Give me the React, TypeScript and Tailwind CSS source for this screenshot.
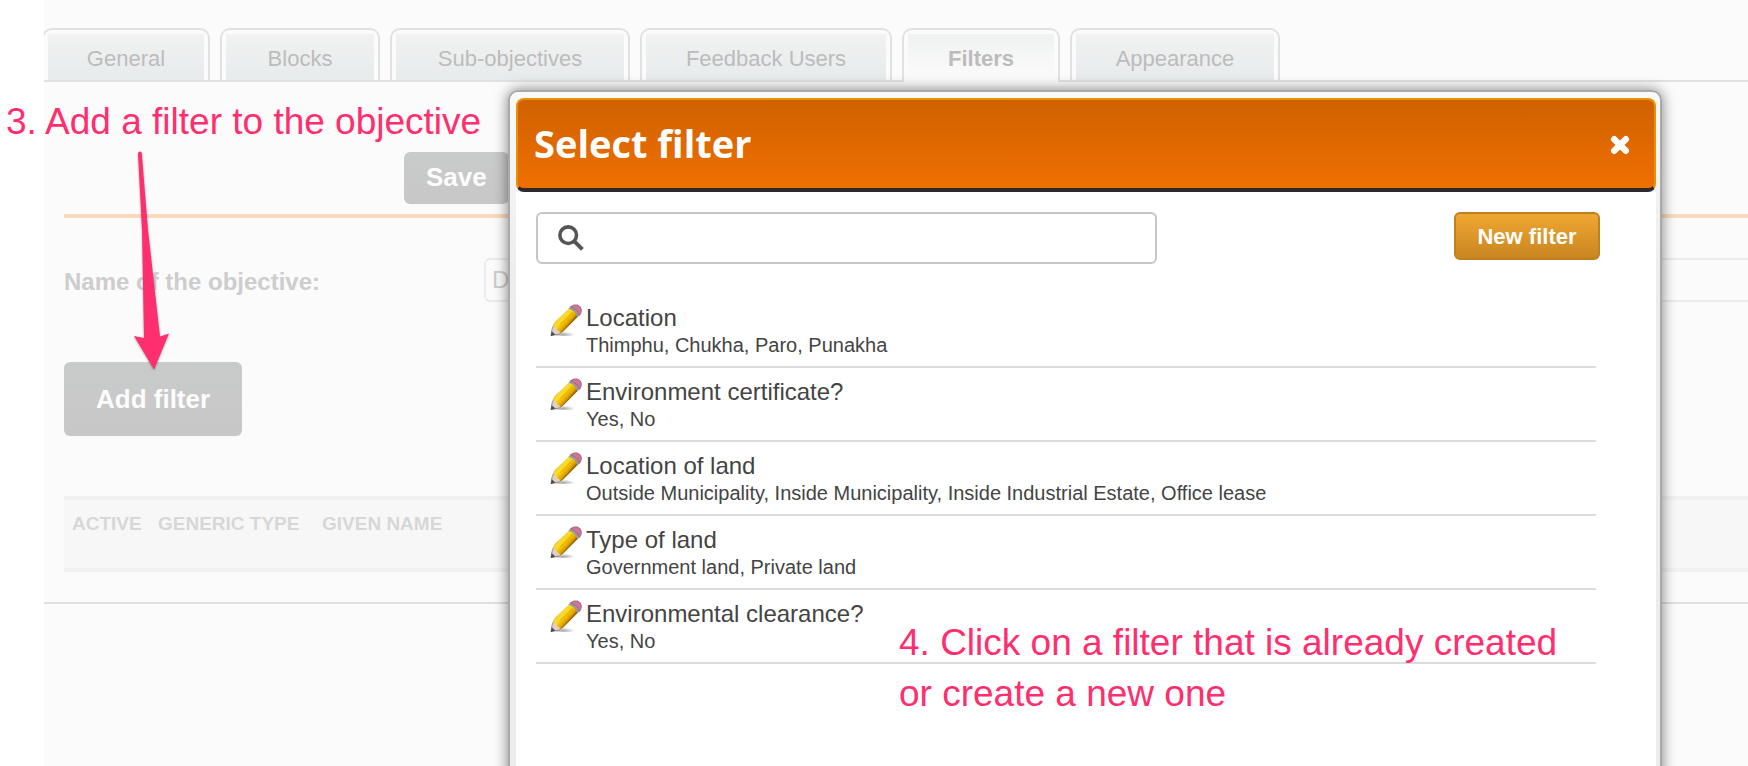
import { useState } from "react";

const tabs = [
  { name: "General", width: "w-[168px]" },
  { name: "Blocks", width: "w-[160px]" },
  { name: "Sub-objectives", width: "w-[240px]" },
  { name: "Feedback Users", width: "w-[252px]" },
  { name: "Filters", width: "w-[158px]" },
  { name: "Appearance", width: "w-[210px]" },
];

const filters = [
  { name: "Location", values: "Thimphu, Chukha, Paro, Punakha" },
  { name: "Environment certificate?", values: "Yes, No" },
  {
    name: "Location of land",
    values: "Outside Municipality, Inside Municipality, Inside Industrial Estate, Office lease",
  },
  { name: "Type of land", values: "Government land, Private land" },
  { name: "Environmental clearance?", values: "Yes, No" },
];

function Pencil() {
  return (
    <svg viewBox="0 0 32 32" className="size-8" aria-hidden="true">
      <defs>
        <linearGradient id="wood" x1="11" y1="10" x2="21" y2="19" gradientUnits="userSpaceOnUse">
          <stop offset="0" stopColor="#b98f10" />
          <stop offset="0.14" stopColor="#f6d433" />
          <stop offset="0.35" stopColor="#f9dc2c" />
          <stop offset="0.6" stopColor="#f2c000" />
          <stop offset="0.85" stopColor="#dc9a00" />
          <stop offset="1" stopColor="#8f6208" />
        </linearGradient>
        <radialGradient id="ground">
          <stop offset="0" stopColor="#000" stopOpacity="0.35" />
          <stop offset="1" stopColor="#000" stopOpacity="0" />
        </radialGradient>
      </defs>
      <ellipse cx="13" cy="30.6" rx="12" ry="3" fill="url(#ground)" />
      <path d="M1 31.6 L2.2 24.6 L4 20.8 L12 28 L9.2 30 Z" fill="#dfd0bf" stroke="#85796a" strokeWidth="0.8" />
      <path d="M0.8 31.9 L1.6 27.2 L5.4 30.4 Z" fill="#4a4a50" />
      <path d="M3.2 21.4 Q3.8 19 5.4 17.4 L19 4.4 Q25.8 5.8 27.6 13 L13 27.8 Q11.6 29 10 28.8 Q9.8 26.8 7.6 26.4 Q7.4 24.2 5.2 23.8 Q5 22.2 3.2 21.4 Z" fill="url(#wood)" />
      <path d="M10.4 20.6 L23 8.2" stroke="#d9a800" strokeWidth="0.8" />
      <path d="M18.4 4.8 L20.8 2.4 Q28 4 29.6 11.2 L27.4 13.4 Q25.4 6.6 18.4 4.8 Z" fill="#9a989c" />
      <path d="M20.4 2.8 Q23.6 0.2 27.4 1 Q31.2 2.2 31.4 6 Q31.5 9.2 29.5 11.4 Q27.8 5 20.4 2.8 Z" fill="#d0749a" stroke="#9c6179" strokeWidth="0.8" />
    </svg>
  );
}

function Magnifier() {
  return (
    <svg viewBox="0 0 26 26" className="size-[26px] shrink-0" fill="none" stroke="#555" aria-hidden="true">
      <circle cx="10.2" cy="10.2" r="8.3" strokeWidth="3.6" />
      <path d="M16.4 16.4 L24.4 24.4" strokeWidth="4" />
    </svg>
  );
}

function Tabs() {
  return (
    <nav className="overflow-hidden pt-7">
      <div className="-ml-0.5 flex h-[54px] items-start gap-2.5 border-b-2 border-[#e1e1e1]">
        {tabs.map((tab) => {
          const active = tab.name === "Filters";
          return (
            <button
              key={tab.name}
              type="button"
              className={`${tab.width} ${
                active ? "h-[54px]" : "h-[52px]"
              } flex shrink-0 flex-col rounded-t-[10px] border-2 border-b-0 border-[#e1e1e1] bg-[#fbfbfb] px-1 pt-1 text-[22px] text-[#bcbcbc]`}
            >
              <span
                className={`flex h-[46px] w-full items-center justify-center bg-linear-to-b pt-0.5 ${
                  active ? "from-[#f0f2f1] to-[#fbfbfb] font-bold" : "from-[#f1f2f1] to-[#e7ebec]"
                }`}
              >
                {tab.name}
              </span>
            </button>
          );
        })}
      </div>
    </nav>
  );
}

function ObjectiveForm() {
  return (
    <main className="border-b-2 border-[#dfdfdf] pl-5 pb-[30px]">
      <div className="flex h-[136px] items-start border-b-4 border-[#fbdaba] pt-[70px] pl-[340px]">
        <button
          type="button"
          className="h-[52px] rounded-md bg-linear-to-b from-[#c9cbca] to-[#c7c7c7] px-[22px] pb-0.5 text-[26px] font-bold text-[#fcfcfc]"
        >
          Save
        </button>
      </div>
      <div className="flex items-center pt-10">
        <label htmlFor="objective" className="w-[420px] shrink-0 pt-1 text-2xl font-bold text-[#cdcdcd]">
          Name of the objective:
        </label>
        <input
          id="objective"
          defaultValue="D"
          className="h-11 min-w-0 flex-1 rounded-l-md border-2 border-r-0 border-[#ebebeb] px-1.5 text-2xl text-[#cdcdcd] outline-none"
        />
      </div>
      <button
        type="button"
        className="mt-[60px] block h-[74px] rounded-md bg-linear-to-b from-[#c9cbca] to-[#c7c7c7] px-8 text-[26px] font-bold text-[#fcfcfc]"
      >
        Add filter
      </button>
      <table className="mt-[60px] w-full border-separate border-spacing-0 border-y-4 border-[#f1f1f1] bg-[#f7f7f7] text-[19px] text-[#d7d7d7]">
        <thead>
          <tr className="h-[68px] text-left align-top leading-6">
            <th className="w-[86px] pt-3 pl-2">ACTIVE</th>
            <th className="w-[164px] pt-3 pl-2">GENERIC TYPE</th>
            <th className="pt-3 pl-2">GIVEN NAME</th>
          </tr>
        </thead>
      </table>
    </main>
  );
}

function FilterDialog() {
  const [query, setQuery] = useState("");
  const shown = filters.filter((f) => f.name.toLowerCase().includes(query.toLowerCase()));
  return (
    <section
      role="dialog"
      aria-labelledby="dialog-title"
      className="absolute top-[90px] right-[86px] -bottom-5 left-[508px] flex flex-col rounded-[10px] border-2 border-[#a9a9a9] bg-linear-to-b from-[#f9f9f9] to-[#ececec] to-[200px] pt-1.5 pr-1 pl-1.5 shadow-[0_0_14px_rgba(0,0,0,0.5)]"
    >
      <header className="flex h-[94px] shrink-0 items-center justify-between rounded-lg border-2 border-b-4 border-[#e89200] border-b-[#2b2b2d] bg-linear-to-b from-[#d06100] to-[#ef7000] pr-6 pl-4 text-white">
        <h2 id="dialog-title" className="pb-0.5 font-['Open_Sans',sans-serif] text-[38px] font-bold">
          Select filter
        </h2>
        <button type="button" aria-label="Close" className="pt-0.5">
          <svg viewBox="0 0 20 20" className="size-5" stroke="#fff" strokeWidth="6.4" strokeLinecap="round" aria-hidden="true">
            <path d="M4.2 4.2 L15.8 15.8 M15.8 4.2 L4.2 15.8" />
          </svg>
        </button>
      </header>
      <div className="flex-1 bg-white pt-5 pr-14 pl-5 text-[#444]">
        <div className="flex items-start justify-between">
          <div className="flex h-[52px] w-7/12 items-center gap-3 rounded-md border-2 border-[#c6c6c6] pr-3 pl-5">
            <Magnifier />
            <input
              aria-label="Search filters"
              value={query}
              onChange={(e) => setQuery(e.target.value)}
              className="min-w-0 flex-1 bg-transparent text-2xl outline-none"
            />
          </div>
          <button
            type="button"
            className="h-12 w-[146px] rounded-md border-2 border-[#bf8021] bg-linear-to-b from-[#f0a732] to-[#c98620] text-[22px] font-bold text-white"
          >
            New filter
          </button>
        </div>
        <ul className="mt-[30px] mr-1">
          {shown.map((filter) => (
            <li key={filter.name} className="flex h-[74px] items-start gap-1 border-b-2 border-[#dcdcdc] pt-2.5 pl-3.5">
              <button type="button" aria-label={`Edit ${filter.name}`}>
                <Pencil />
              </button>
              <a href="#" className="block">
                <span className="block text-2xl leading-7">{filter.name}</span>
                <span className="block text-xl leading-[26px]">{filter.values}</span>
              </a>
            </li>
          ))}
        </ul>
      </div>
    </section>
  );
}

export default function App() {
  return (
    <div className="relative h-screen overflow-hidden bg-white pl-11 font-['Liberation_Sans',Arial,sans-serif]">
      <div className="h-full bg-[#fbfbfb]">
        <Tabs />
        <ObjectiveForm />
      </div>
      <FilterDialog />
      <p className="absolute top-[101px] left-1.5 text-[37px] leading-[42px] whitespace-nowrap text-[#ff2e6e]">
        3. Add a filter to the objective
      </p>
      <svg
        viewBox="0 0 44 228"
        className="absolute top-[148px] left-[130px] h-[228px] w-11 drop-shadow-[0_1px_1px_rgba(0,0,0,0.35)]"
        aria-hidden="true"
      >
        <path
          d="M8 5.5 Q8.2 3.4 10 3.4 Q11.6 3.4 11.8 5.5 L18 82 L30 188.5 L39 185.5 L24 221.5 L4 188 L14 190 L12 82 Z"
          fill="#ff2e6e"
        />
      </svg>
      <p className="absolute top-[617px] left-[899px] text-[37px] leading-[51px] whitespace-nowrap text-[#ff2e6e]">
        4. Click on a filter that is already created
        <br />
        or create a new one
      </p>
    </div>
  );
}
